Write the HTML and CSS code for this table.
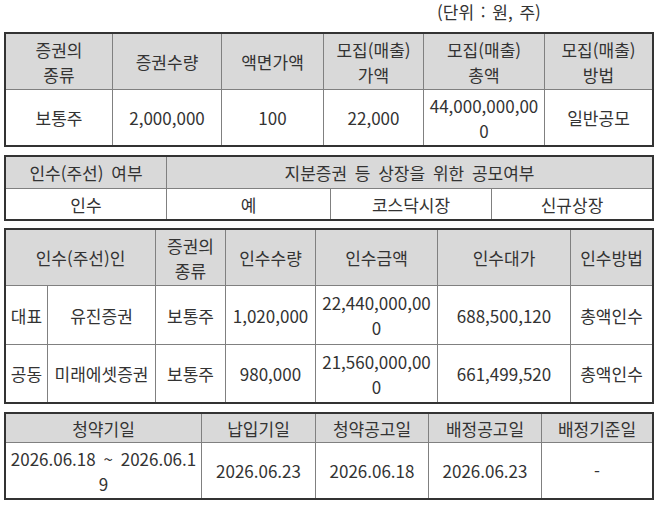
FILE: index.html
```html
<!DOCTYPE html>
<html lang="ko">
<head>
<meta charset="utf-8">
<title>공모 개요</title>
<link rel="stylesheet" href="styles.css">
</head>
<body>
<div class="page">
  <div class="unit">(단위 : 원, 주)</div>

  <div class="tbl t1">
    <div class="c h">증권의<br>종류</div>
    <div class="c h">증권수량</div>
    <div class="c h">액면가액</div>
    <div class="c h">모집(매출)<br>가액</div>
    <div class="c h">모집(매출)<br>총액</div>
    <div class="c h">모집(매출)<br>방법</div>
    <div class="c">보통주</div>
    <div class="c">2,000,000</div>
    <div class="c">100</div>
    <div class="c">22,000</div>
    <div class="c">44,000,000,00<br>0</div>
    <div class="c">일반공모</div>
  </div>

  <div class="tbl t2">
    <div class="c h">인수(주선) 여부</div>
    <div class="c h span3">지분증권 등 상장을 위한 공모여부</div>
    <div class="c">인수</div>
    <div class="c">예</div>
    <div class="c">코스닥시장</div>
    <div class="c">신규상장</div>
  </div>

  <div class="tbl t3">
    <div class="c h span2">인수(주선)인</div>
    <div class="c h">증권의<br>종류</div>
    <div class="c h">인수수량</div>
    <div class="c h">인수금액</div>
    <div class="c h">인수대가</div>
    <div class="c h">인수방법</div>
    <div class="c">대표</div>
    <div class="c">유진증권</div>
    <div class="c">보통주</div>
    <div class="c">1,020,000</div>
    <div class="c">22,440,000,00<br>0</div>
    <div class="c">688,500,120</div>
    <div class="c">총액인수</div>
    <div class="c">공동</div>
    <div class="c">미래에셋증권</div>
    <div class="c">보통주</div>
    <div class="c">980,000</div>
    <div class="c">21,560,000,00<br>0</div>
    <div class="c">661,499,520</div>
    <div class="c">총액인수</div>
  </div>

  <div class="tbl t4">
    <div class="c h">청약기일</div>
    <div class="c h">납입기일</div>
    <div class="c h">청약공고일</div>
    <div class="c h">배정공고일</div>
    <div class="c h">배정기준일</div>
    <div class="c">2026.06.18 ~ 2026.06.1<br>9</div>
    <div class="c">2026.06.23</div>
    <div class="c">2026.06.18</div>
    <div class="c">2026.06.23</div>
    <div class="c">-</div>
  </div>
</div>
</body>
</html>
```
FILE: styles.css
```css
html, body {
  margin: 0;
  padding: 0;
  background: #ffffff;
}

.page {
  padding-left: 4px;
  width: 650px;
  font-family: "Noto Sans CJK KR", "Noto Sans", sans-serif;
  font-size: 17px;
  letter-spacing: 0;
  word-spacing: 3px;
  color: #333333;
}

.unit {
  height: 24px;
  line-height: 24px;
  padding-left: 433px;
  white-space: pre;
  word-spacing: 2px;
  margin-bottom: 8px;
}

.tbl {
  display: grid;
  gap: 1px;
  width: 650px;
  box-sizing: border-box;
  border: 2px solid #333333;
  background: #808080;
}

.c {
  background: #ffffff;
  display: flex;
  align-items: center;
  justify-content: center;
  text-align: center;
  line-height: 25px;
  white-space: nowrap;
}

.h {
  background: #d9d9d9;
}

.span2 { grid-column: span 2; }
.span3 { grid-column: span 3; }

.t1 {
  grid-template-columns: 106px 108px 101px 99px 120px 107px;
  grid-template-rows: 55px 55px;
  margin-bottom: 8px;
}

.t2 {
  grid-template-columns: 160px 163px 160px 160px;
  grid-template-rows: 31px 30px;
  margin-bottom: 7px;
}

.t3 {
  grid-template-columns: 41px 107px 69px 89px 121px 132px 81px;
  grid-template-rows: 55px 58px 57px;
  margin-bottom: 8px;
}

.t4 {
  grid-template-columns: 195px 113px 112px 112px 110px;
  grid-template-rows: 28px 55px;
}
```
